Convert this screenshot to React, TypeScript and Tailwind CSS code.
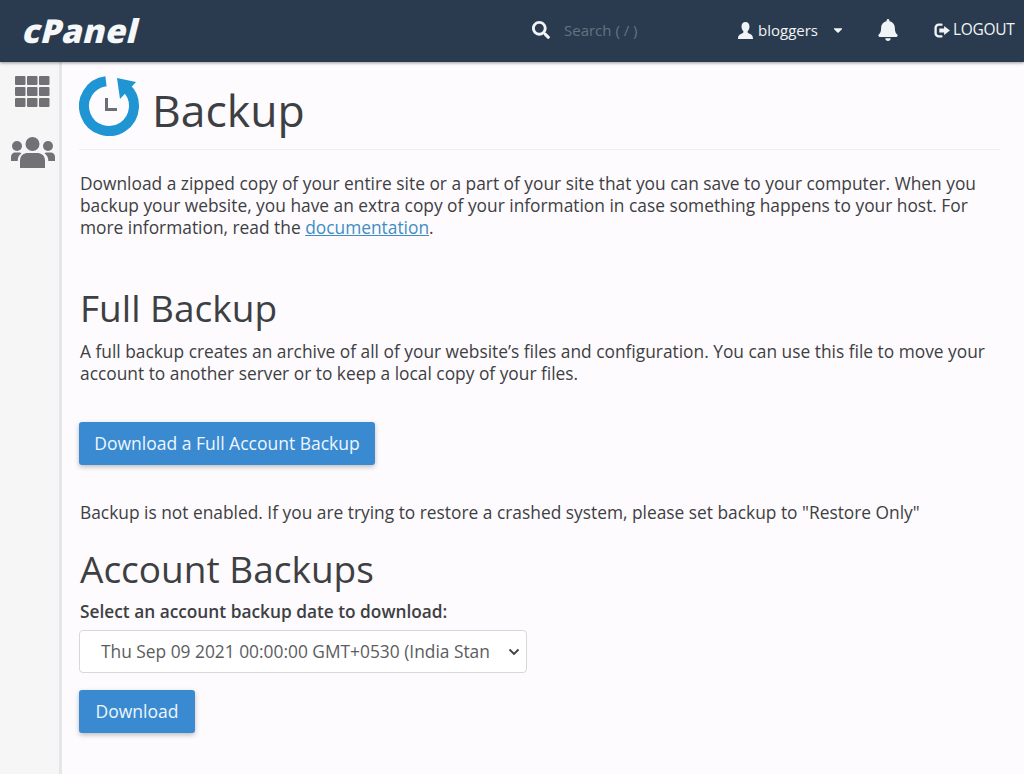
import React from "react";
import { FaSearch, FaBell, FaCaretDown } from "react-icons/fa";

function Logout() {
  return (
    <svg width="17" height="15" viewBox="0 0 16 14" className="text-[#f1f4f6]" fill="none">
      <path d="M7 1.500H4.500A3 3 0 0 0 1.500 4.500v5a3 3 0 0 0 3 3H7" stroke="currentColor" strokeWidth="2.200" strokeLinecap="round" />
      <path d="M5 5.200h4.500V2.700L15 7l-5.500 4.300V8.800H5z" fill="currentColor" />
    </svg>
  );
}

function UserGlyph() {
  return (
    <svg width="15" height="17" viewBox="0 0 15 17" fill="currentColor" className="shrink-0">
      <path d="M7.500 0C10 0 11.500 2 11.500 4.500C11.500 6.500 10.500 8.500 9.500 9.500C9.500 10.500 10 11 11.500 11.700C13.500 12.500 15 13.500 15 17H0C0 13.500 1.500 12.500 3.500 11.700C5 11 5.500 10.500 5.500 9.500C4.500 8.500 3.500 6.500 3.500 4.500C3.500 2 5 0 7.500 0Z" />
    </svg>
  );
}

function BackupIcon() {
  return (
    <svg width="60" height="60" viewBox="0 0 60 60" fill="none" className="shrink-0">
      <path d="M27 5.200A25 25 0 1 0 47 11.700" stroke="#1f96d3" strokeWidth="10" />
      <path d="M38 2L57 6L41 23z" fill="#1f96d3" />
      <path d="M27.500 22V33.500H38" stroke="#6b6e72" strokeWidth="3" />
    </svg>
  );
}

function GridGlyph() {
  const cells = [0, 12, 24];
  const rows = [0, 11, 22];
  return (
    <svg width="36" height="31" viewBox="0 0 36 31" fill="currentColor" className="shrink-0">
      {rows.map((y) => cells.map((x) => <rect key={x + "-" + y} x={x} y={y} width="10.500" height="9" rx="1" />))}
    </svg>
  );
}

function UsersGlyph() {
  return (
    <svg width="44" height="31" viewBox="0 0 44 31" fill="currentColor" className="shrink-0">
      <circle cx="21.500" cy="7" r="7" />
      <circle cx="6" cy="9" r="5" />
      <circle cx="37" cy="9" r="5" />
      <path d="M9 31V24C9 18 13 16 17 16H26C30 16 34 18 34 24V31Z" />
      <path d="M0 24V20C0 17 2 15.500 4 15.500H8.500C9 15.500 10 16 10.500 16.500C8 18 6.700 20.500 6.700 24Z" />
      <path d="M44 24V20C44 17 42 15.500 40 15.500H35.500C35 15.500 34 16 33.500 16.500C36 18 37.300 20.500 37.300 24Z" />
    </svg>
  );
}

function Btn({ children, className }: { children: React.ReactNode; className: string }) {
  return (
    <button className={"-ml-px block h-[43px] rounded-[3px] bg-[#3a8ad2] text-[#eef6fc] text-[17.500px] shadow-[0_2px_5px_rgba(0,0,0,0.25)] " + className}>
      {children}
    </button>
  );
}

export default function App() {
  return (
    <div className="flex h-[774px] w-[1024px] flex-col overflow-hidden bg-[#fdfbfd] font-['Open_Sans',sans-serif] text-[#3d4043]">
      <header className="relative flex h-[62px] shrink-0 items-center bg-[#2a3b4f] pb-[2px] text-[#f1f4f6] shadow-[0_1px_3px_rgba(0,0,0,0.4)]">
        <div className="ml-[24px] w-[116px] skew-x-[-14deg] text-[33px] font-extrabold leading-none tracking-[0.5px] text-[#f5f7f8]">cPanel</div>
        <FaSearch className="ml-[392px] text-[18px]" />
        <span className="ml-[14px] w-[120px] text-[15px] text-[#66727f]">Search ( / )</span>
        <span className="ml-[54px]"><UserGlyph /></span>
        <span className="ml-[5px] text-[15px]">bloggers</span>
        <FaCaretDown className="ml-[13px] text-[14px]" />
        <FaBell className="ml-[32px] text-[22px]" />
        <span className="ml-[35px]"><Logout /></span>
        <span className="ml-[2px] text-[15.500px] tracking-[-0.3px]">LOGOUT</span>
      </header>
      <div className="flex min-h-0 flex-1">
        <aside className="flex w-[62px] shrink-0 flex-col items-center border-r-[3px] border-[#e6e6e8] bg-[#f6f6f7] pl-[6px] pt-[14px] text-[#727276]">
          <GridGlyph />
          <span className="mt-[30px]"><UsersGlyph /></span>
        </aside>
        <main className="min-w-0 flex-1 pl-[17px] pr-[24px]">
          <div className="flex h-[88px] items-center gap-[13px] border-b border-[#f0eef0]">
            <span className="mt-[1px]"><BackupIcon /></span>
            <h1 className="mt-[9px] text-[44.500px] font-normal leading-none">Backup</h1>
          </div>
          <div className="pl-px">
            <p className="mt-[22px] text-[17.350px] leading-[22px]">
              Download a zipped copy of your entire site or a part of your site that you can save to your computer. When you backup your website, you have an extra copy of your information in case something happens to your host. For more information, read the <a className="text-[#3d8ec4] underline">documentation</a>.
            </p>
            <h2 className="mt-[46px] text-[37px] font-normal leading-[48px]">Full Backup</h2>
            <p className="mt-[8px] text-[17.350px] leading-[22px]">
              A full backup creates an archive of all of your website’s files and configuration. You can use this file to move your account to another server or to keep a local copy of your files.
            </p>
            <Btn className="mt-[38px] w-[296px]">Download a Full Account Backup</Btn>
            <p className="mt-[36px] text-[17.350px] leading-[22px]">
              Backup is not enabled. If you are trying to restore a crashed system, please set backup to "Restore Only"
            </p>
            <h2 className="mt-[22px] text-[37px] font-normal leading-[48px]">Account Backups</h2>
            <label className="mt-[8px] block text-[17.300px] font-semibold leading-[22px]">Select an account backup date to download:</label>
            <div className="-ml-px mt-[7px] flex h-[43px] w-[448px] items-center justify-between rounded-[4px] border border-[#d8d8da] bg-white pl-[21px] pr-[6px] text-[17.350px] text-[#5a5d60]">
              <span className="overflow-hidden whitespace-nowrap">Thu Sep 09 2021 00:00:00 GMT+0530 (India Stan</span>
              <svg width="12" height="8" viewBox="0 0 12 8" fill="none"><path d="M1.500 1.500L6 6l4.500-4.500" stroke="#3d4043" strokeWidth="1.800" /></svg>
            </div>
            <Btn className="mt-[17px] w-[116px]">Download</Btn>
          </div>
        </main>
      </div>
    </div>
  );
}
